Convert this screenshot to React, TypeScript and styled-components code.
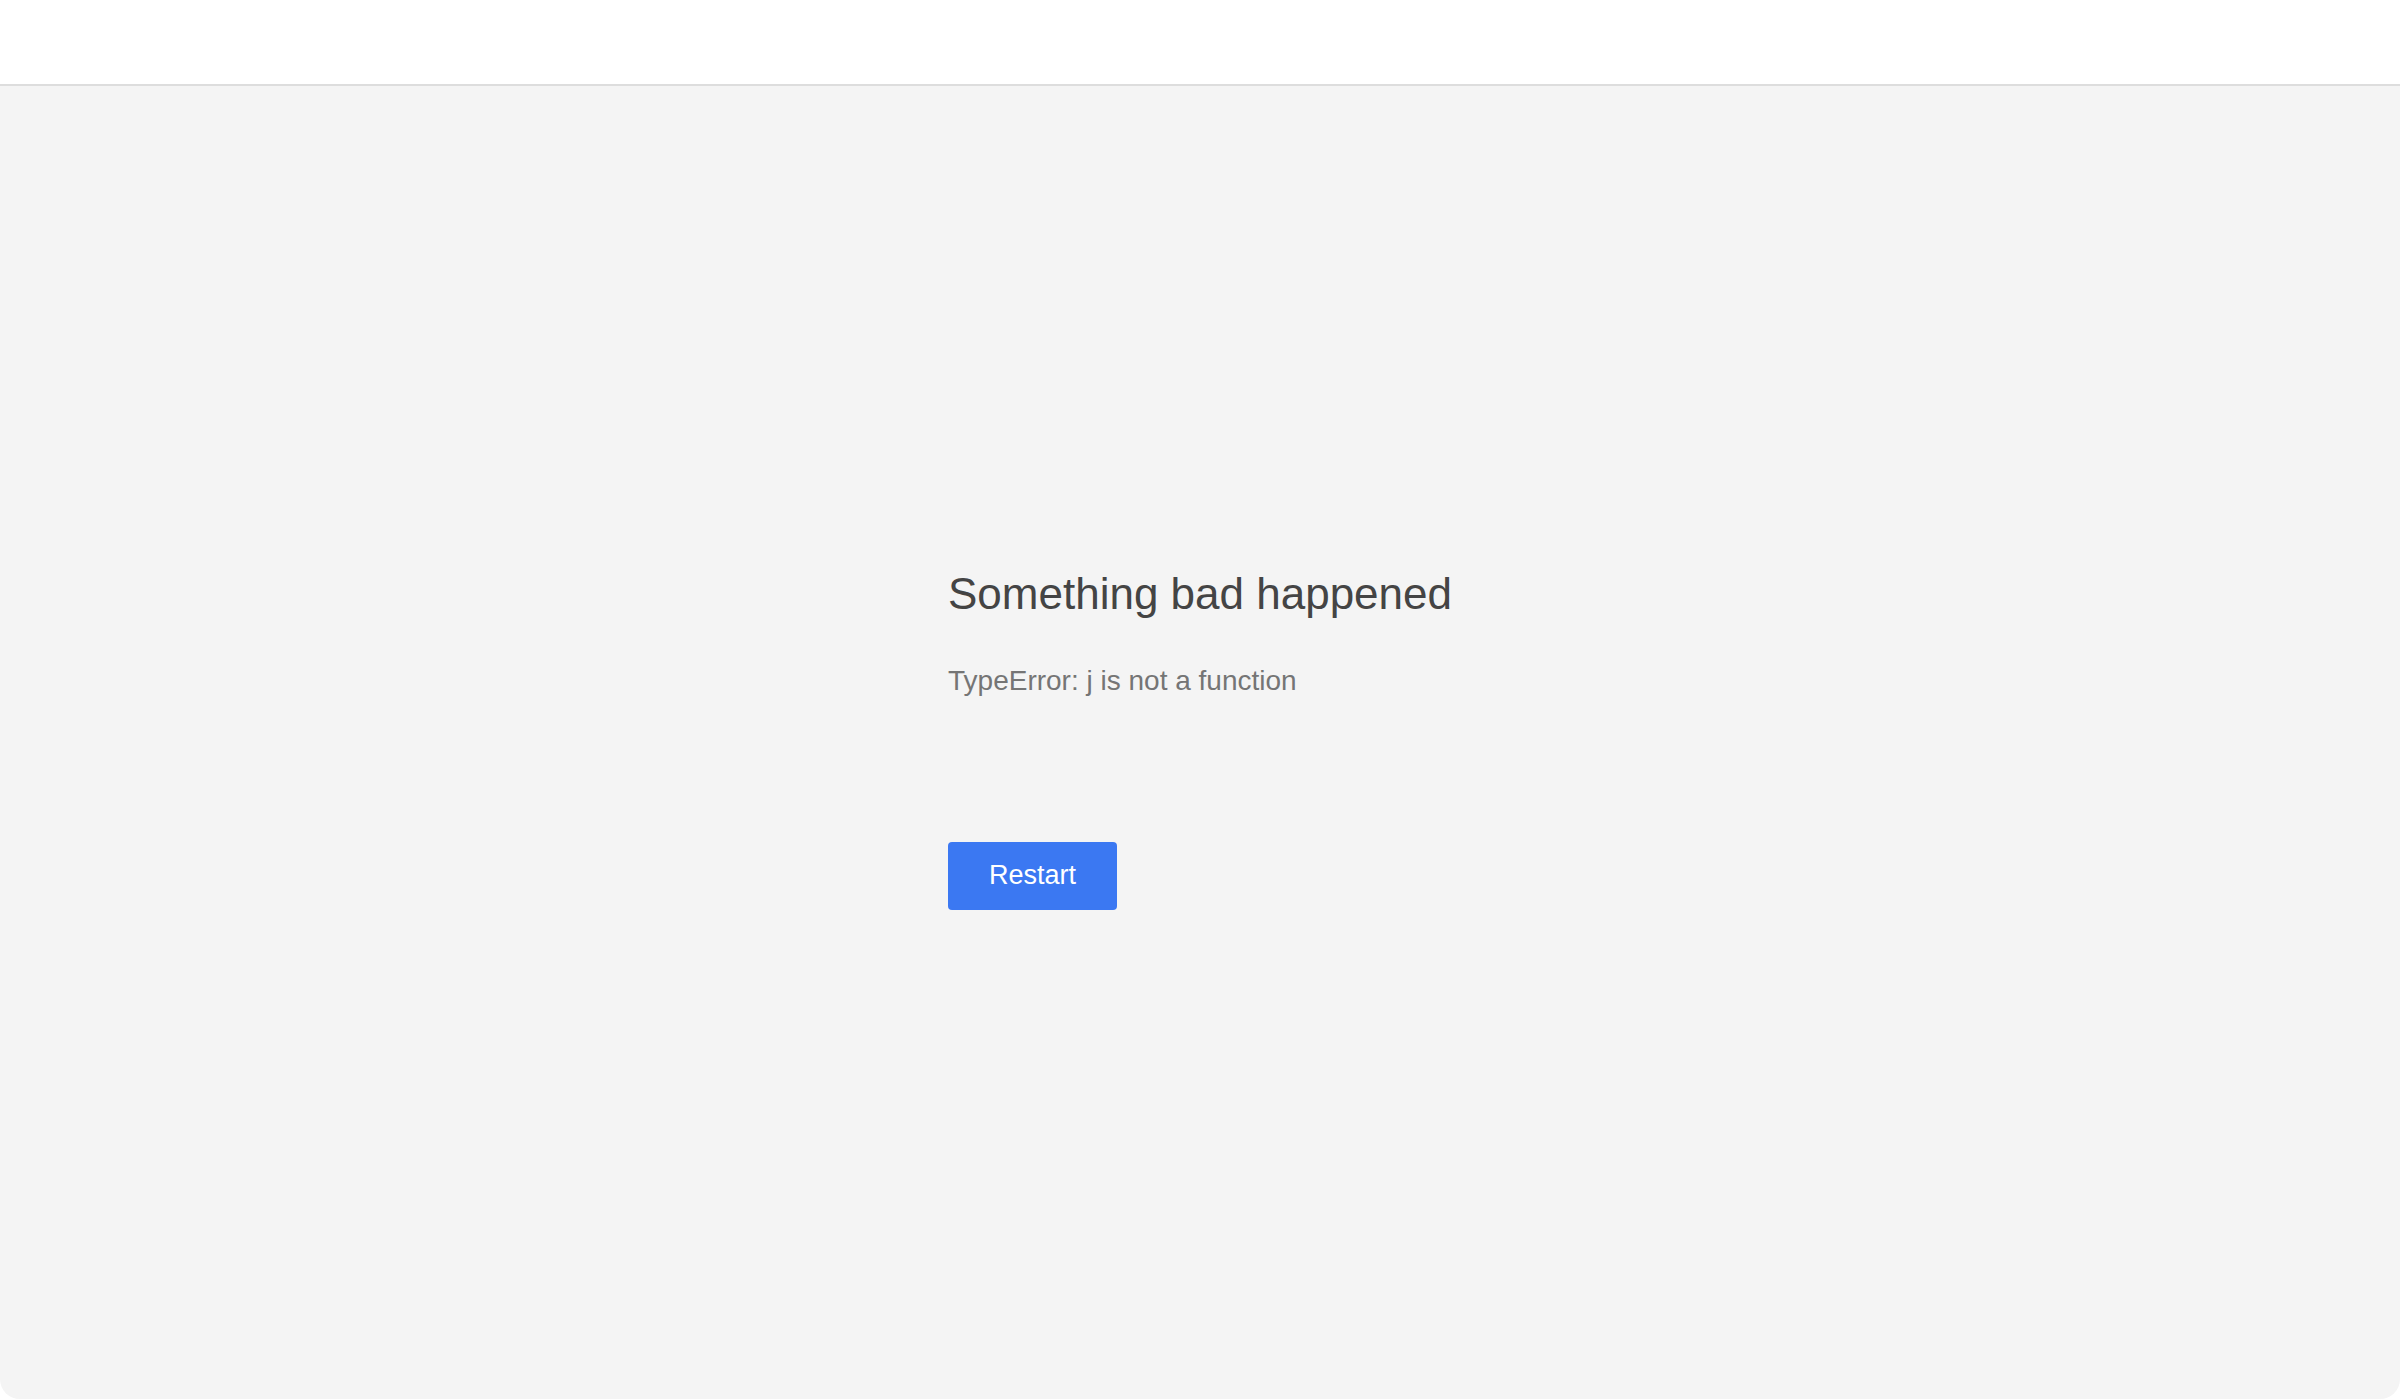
import styled, { createGlobalStyle } from "styled-components";

const GlobalStyle = createGlobalStyle`
  html, body {
    margin: 0;
    padding: 0;
    background: #ffffff;
    font-family: "Liberation Sans", Arial, Helvetica, sans-serif;
  }
  * {
    box-sizing: border-box;
  }
`;

const Shell = styled.div`
  height: 100vh;
  display: flex;
  flex-direction: column;
  padding-bottom: 1px;
`;

const TopBar = styled.header`
  height: 86px;
  flex-shrink: 0;
  background: #ffffff;
  border-bottom: 2px solid #dddddd;
`;

const Panel = styled.main`
  flex: 1;
  background: #f4f4f4;
  border-radius: 0 0 20px 20px;
  display: flex;
  align-items: center;
  justify-content: center;
  padding-bottom: 8px;
`;

const ErrorBox = styled.div`
  width: 504px;
  display: flex;
  flex-direction: column;
  align-items: flex-start;
`;

const Title = styled.h1`
  margin: 0;
  font-size: 44px;
  line-height: 52px;
  font-weight: 400;
  color: #444444;
`;

const Message = styled.p`
  margin: 44px 0 0;
  font-size: 28px;
  line-height: 34px;
  color: #757575;
`;

const RestartButton = styled.button`
  margin-top: 144px;
  height: 68px;
  padding: 0 41px;
  border: none;
  border-radius: 4px;
  background: #3b78f2;
  color: #ffffff;
  font-family: inherit;
  font-size: 27px;
  line-height: 1;
  cursor: pointer;
`;

export default function App() {
  return (
    <>
      <GlobalStyle />
      <Shell>
        <TopBar />
        <Panel>
          <ErrorBox>
            <Title>Something bad happened</Title>
            <Message>TypeError: j is not a function</Message>
            <RestartButton>Restart</RestartButton>
          </ErrorBox>
        </Panel>
      </Shell>
    </>
  );
}
